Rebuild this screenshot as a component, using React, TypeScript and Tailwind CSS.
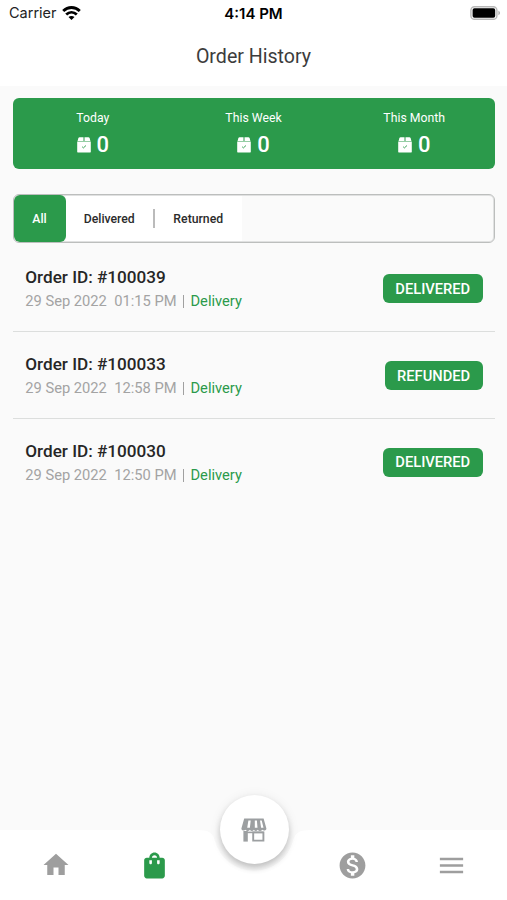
import { useState } from 'react'
import { MdHome, MdMenu, MdMonetizationOn, MdShoppingBag } from 'react-icons/md'

const stats = [
  { label: 'Today', value: 0 },
  { label: 'This Week', value: 0 },
  { label: 'This Month', value: 0 },
]

const orders = [
  { id: 100039, date: '29 Sep 2022', time: '01:15 PM', type: 'Delivery', status: 'DELIVERED' },
  { id: 100033, date: '29 Sep 2022', time: '12:58 PM', type: 'Delivery', status: 'REFUNDED' },
  { id: 100030, date: '29 Sep 2022', time: '12:50 PM', type: 'Delivery', status: 'DELIVERED' },
]

/* ── Icons ─────────────────────────────────────────────────────────────────── */

function WifiIcon() {
  return (
    <svg className="mb-[2px]" width="19" height="14" viewBox="0 0 19 14" fill="none" stroke="#000" strokeWidth="2.9">
      <path d="M1.2 5C6 0.4 13 0.4 17.8 5" />
      <path d="M4.2 8.5C7.4 5.6 11.6 5.6 14.8 8.5" />
      <path d="M9.5 13.9L6.5 11C8.2 9.5 10.8 9.5 12.5 11Z" fill="#000" stroke="none" />
    </svg>
  )
}

function BatteryIcon() {
  return (
    <svg className="mb-[1px]" width="31" height="14" viewBox="0 0 31 14">
      <rect x="0.9" y="0.7" width="26" height="12.6" rx="3.6" fill="#fff" stroke="#b8b8b8" strokeWidth="1.4" />
      <rect x="2.6" y="2.3" width="22.6" height="9.4" rx="1.8" fill="#000" />
      <path d="M28.4 4.8C30.5 5.5 30.5 8.5 28.4 9.2Z" fill="#b0b0b0" />
    </svg>
  )
}

function PackageIcon() {
  return (
    <svg width="14" height="16" viewBox="0 0 14 16">
      <path d="M2.6 0.2H6.5V3.9H0.6L1.4 1.1Q1.7 0.2 2.6 0.2Z" fill="#fff" />
      <path d="M7.5 0.2H11.4Q12.3 0.2 12.6 1.1L13.4 3.9H7.5Z" fill="#fff" />
      <path d="M0.2 4.4H13.8V14.4Q13.8 15.6 12.6 15.6H1.4Q0.2 15.6 0.2 14.4Z" fill="#fff" />
      <path d="M5.1 9.7L6.4 10.9L9 8.5" fill="none" stroke="#2b9a4b" strokeWidth="0.9" />
    </svg>
  )
}

function StoreIcon() {
  return (
    <svg width="26" height="24" viewBox="0 0 26 24">
      <path
        fill="#9c9fa1"
        fillRule="evenodd"
        d="M3.2 0.6H22.6L25.4 10.4C25.4 12.6 22.6 13.2 21.3 11.8C20 13.4 17.8 13.4 16.8 11.8C15.6 13.4 14 13.4 12.9 11.8C11.8 13.4 10 13.4 8.9 11.8C7.8 13.4 5.8 13.4 4.5 11.8C3.2 13.2 0.4 12.6 0.4 10.4ZM7.4 2.4L6.2 9.8H8.9L9.7 2.4ZM13.8 2.4V9.8H16.5L15.9 2.4ZM19 2.4L20.1 9.8H22.5L20.7 2.4Z"
      />
      <path d="M2.4 13H6.8V23.6H2.4Z" fill="#9c9fa1" />
      <path d="M6 13.6H22.6V15.2H6Z" fill="#9c9fa1" />
      <path d="M12.2 14.4H22.4V22.6H12.2Z" fill="none" stroke="#9c9fa1" strokeWidth="1.9" />
    </svg>
  )
}

/* ── Top of the screen ─────────────────────────────────────────────────────── */

function StatusBar() {
  return (
    <div className="grid h-[27px] grid-cols-3 items-center pr-[6px] pl-[9px] font-['Inter'] text-[14.5px] leading-none text-black">
      <div className="flex items-center gap-[5px]">
        <span className="text-[#222]">Carrier</span>
        <WifiIcon />
      </div>
      <div className="-ml-[3px] text-center text-[15px] font-semibold whitespace-nowrap">4:14 PM</div>
      <div className="flex justify-end">
        <BatteryIcon />
      </div>
    </div>
  )
}

function StatsCard() {
  return (
    <section className="grid h-[71px] grid-cols-3 rounded-[6px] bg-[#2b9a4b] pt-[11.5px] text-white">
      {stats.map((stat) => (
        <div key={stat.label} className="flex flex-col items-center">
          <span className="text-[12.25px] leading-4">{stat.label}</span>
          <div className="mt-[6px] flex items-center gap-[6px]">
            <PackageIcon />
            <span className="text-[22px] leading-[26px] font-medium">{stat.value}</span>
          </div>
        </div>
      ))}
    </section>
  )
}

/* ── Filter tabs ───────────────────────────────────────────────────────────── */

function FilterTabs() {
  const [active, setActive] = useState('All')
  const tabClasses = 'flex h-full items-center justify-center rounded-[6px]'

  return (
    <div className="mt-[25px] flex h-[49px] overflow-hidden rounded-[6px] border border-[#bcbebd] text-[12.25px] font-medium shadow-[inset_0_0_0_1px_#e0e1e1]">
      <div className="flex items-center">
        {['All', 'Delivered', 'Returned'].map((tab, i) => (
          <div
            key={tab}
            className={`flex items-center ${active === tab ? 'h-[47px]' : 'h-[45px] bg-white'}`}
          >
            {i === 2 && <span className="h-[19px] w-[1.5px] bg-[#bbb]" />}
            <button
              type="button"
              onClick={() => setActive(tab)}
              className={`${tabClasses} ${i === 0 ? 'w-[52px]' : 'w-[87.5px]'} ${
                active === tab ? 'bg-[#2b9a4b] text-white' : 'text-[#2b2b2b]'
              }`}
            >
              {tab}
            </button>
          </div>
        ))}
      </div>
    </div>
  )
}

/* ── Orders ────────────────────────────────────────────────────────────────── */

function OrderRow({ order }: { order: (typeof orders)[number] }) {
  return (
    <li className="flex h-[86.7px] items-start justify-between border-b border-[#dcdedd] pr-[12px] pl-[12.8px] last:border-b-0">
      <div className="pt-[20px]">
        <h2 className="text-[17.15px] leading-6 font-medium text-[#262626]">Order ID: #{order.id}</h2>
        <p className="text-[14.7px] leading-6 whitespace-pre text-[#a3a3a3]">
          {order.date}{'  '}{order.time}
          <span className="mx-[6.5px] inline-block h-[13px] w-px translate-y-[2px] bg-[#a0a0a0]" />
          <span className="text-[#2b9a4b]">{order.type}</span>
        </p>
      </div>
      <span className="mt-[29px] flex h-[29px] items-center rounded-[6px] bg-[#2b9a4b] px-[12.3px] text-[14.7px] font-medium text-white">
        {order.status}
      </span>
    </li>
  )
}

/* ── Bottom navigation ─────────────────────────────────────────────────────── */

function BottomNav() {
  return (
    <nav className="relative h-[70px] shrink-0">
      {/* bar with the notch for the round button */}
      <svg className="absolute inset-0" width="507" height="70" viewBox="0 0 507 70">
        <path
          fill="#fff"
          d="M0 0H197C209 0 213 3 215 11A40.4 40.4 0 0 0 293 11C295 3 299 0 311 0H507V70H0Z"
        />
      </svg>
      <div className="relative grid h-[70px] grid-cols-[112.5px_84.5px_112px_86px_112px] items-center text-[#9e9e9e]">
        <button type="button" aria-label="Home" className="flex justify-center">
          <MdHome size={30} />
        </button>
        <button type="button" aria-label="Orders" className="flex justify-center text-[#2b9a4b]">
          <MdShoppingBag size={31} />
        </button>
        <span />
        <button type="button" aria-label="Wallet" className="flex justify-center">
          <MdMonetizationOn size={31} />
        </button>
        <button type="button" aria-label="Menu" className="flex justify-center">
          <MdMenu size={31} />
        </button>
      </div>
      <button
        type="button"
        aria-label="Store"
        className="absolute -top-[35px] left-[219.5px] flex size-[69px] items-center justify-center rounded-full bg-white shadow-[0_4px_6px_rgba(0,0,0,0.2),0_1px_12px_rgba(0,0,0,0.08)]"
      >
        <StoreIcon />
      </button>
    </nav>
  )
}

export default function App() {
  return (
    <div className="flex h-[900px] w-[507px] flex-col overflow-hidden bg-[#fafafa] font-['Roboto',sans-serif]">
      <header className="h-[86px] shrink-0 bg-white">
        <StatusBar />
        <h1 className="mt-[18px] text-center text-[19.6px] leading-6 text-[#3c3c3c]">Order History</h1>
      </header>
      <main className="flex-1 px-[12.5px] pt-[12.4px]">
        <StatsCard />
        <FilterTabs />
        <ul className="mt-[2px]">
          {orders.map((order) => (
            <OrderRow key={order.id} order={order} />
          ))}
        </ul>
      </main>
      <BottomNav />
    </div>
  )
}
